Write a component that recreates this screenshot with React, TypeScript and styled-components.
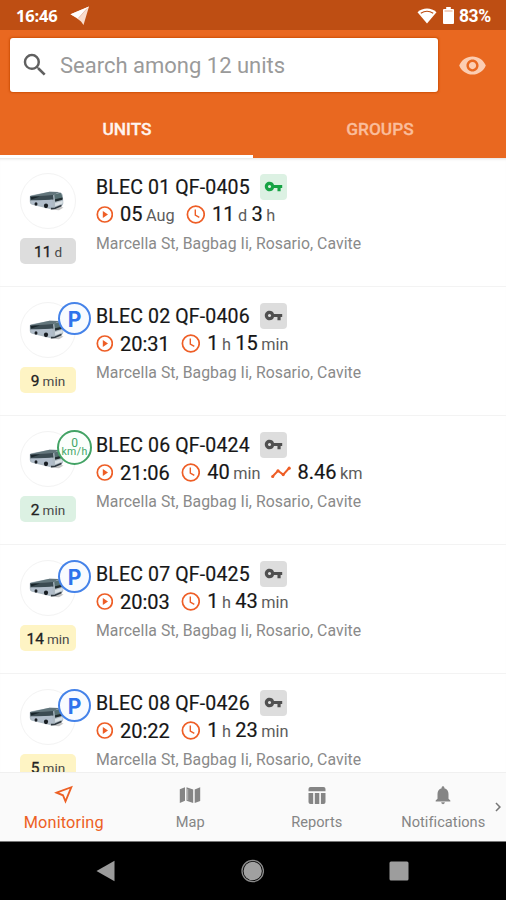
import React from "react";
import styled, { createGlobalStyle } from "styled-components";
import {
  MdSearch,
  MdVisibility,
  MdVpnKey,
  MdNotifications,
  MdChevronRight,
} from "react-icons/md";

const GlobalStyle = createGlobalStyle`
  * { box-sizing: border-box; }
  body { margin: 0; background: #fff; font-family: Roboto, sans-serif; }
`;

const Screen = styled.div`
  width: 506px;
  height: 900px;
  display: flex;
  flex-direction: column;
  overflow: hidden;
  background: #fff;
  white-space: nowrap;
  svg { display: block; flex: none; }
`;

const StatusBar = styled.div`
  flex: none;
  height: 30px;
  padding: 1px 15px 0 16px;
  display: flex;
  align-items: center;
  justify-content: space-between;
  background: #be4e13;
  color: #fff;
  font-size: 17px;
  font-weight: 700;
`;

const StatusGroup = styled.div<{ $gap: number }>`
  display: flex;
  align-items: center;
  gap: ${(p) => p.$gap}px;
`;

const Clock = styled.span`
  font-family: "Open Sans", Roboto, sans-serif;
  font-size: 16.5px;
  letter-spacing: -0.2px;
`;

const Battery = styled.span`
  margin-left: -1px;
  font-size: 17.5px;
  letter-spacing: -0.3px;
`;

const Header = styled.header`
  flex: none;
  height: 128px;
  display: flex;
  flex-direction: column;
  background: #e96820;
`;

const SearchRow = styled.div`
  height: 70px;
  padding: 8px 19px 8px 10px;
  display: flex;
  align-items: flex-start;
  justify-content: space-between;
`;

const SearchField = styled.div`
  width: 428px;
  height: 54px;
  padding-left: 10px;
  display: flex;
  align-items: center;
  border-radius: 3px;
  background: #fff;
  box-shadow: 0 0 2px 1px #cf5108;
  color: #606060;
`;

const Placeholder = styled.span`
  margin-left: 10px;
  color: #9a9a9a;
  font-size: 22px;
`;

const VisibilityButton = styled.div`
  height: 54px;
  display: flex;
  align-items: center;
  color: #fccdb2;
`;

const Tabs = styled.div`
  flex: 1;
  display: grid;
  grid-template-columns: 1fr 1fr;
`;

const Tab = styled.div<{ $active?: boolean }>`
  display: flex;
  align-items: center;
  justify-content: center;
  padding: 2px 0 0 1px;
  font-size: 17.3px;
  font-weight: 500;
  -webkit-text-stroke: 0.3px currentColor;
  color: ${(p) => (p.$active ? "#fff4ee" : "#fabd9b")};
  border-bottom: 3px solid ${(p) => (p.$active ? "#fff" : "transparent")};
`;

const List = styled.main`
  flex: 1;
  min-height: 0;
  overflow: hidden;
  box-shadow: inset 0 3px 3px -2px #e3e0de;
`;

const Row = styled.article`
  height: 129px;
  padding: 15px 20px 0;
  display: flex;
  border-bottom: 1.5px solid #f3f3f3;
`;

const Side = styled.div`
  position: relative;
  width: 56px;
  margin-right: 20px;
`;

const Avatar = styled.div`
  width: 56px;
  height: 56px;
  display: flex;
  align-items: center;
  justify-content: center;
  padding-right: 3px;
  border: 1.5px solid #f3f3f3;
  border-radius: 50%;
`;

const Age = styled.div<{ $color: string }>`
  margin-top: 9px;
  height: 26px;
  display: flex;
  align-items: baseline;
  justify-content: center;
  gap: 3px;
  border-radius: 5px;
  background: ${(p) => p.$color};
  color: #222;
  font-size: 15.5px;
  line-height: 28px;
  -webkit-text-stroke: 0.3px currentColor;
`;

const AgeUnit = styled.span`
  color: #484848;
  font-size: 13.5px;
  -webkit-text-stroke: 0;
`;

const ParkingBadge = styled.div`
  position: absolute;
  left: 38px;
  top: 0;
  width: 33px;
  height: 33px;
  display: flex;
  align-items: center;
  justify-content: center;
  border: 2px solid #4583e9;
  border-radius: 50%;
  background: #f8fbff;
  color: #2f73ec;
  font-family: Inter, Roboto, sans-serif;
  font-size: 21px;
  padding-top: 2px;
  font-weight: 700;
`;

const SpeedBadge = styled.div`
  position: absolute;
  left: 37px;
  top: -1px;
  width: 35px;
  height: 35px;
  display: flex;
  flex-direction: column;
  align-items: center;
  justify-content: center;
  padding-bottom: 2px;
  border: 2px solid #43a365;
  border-radius: 50%;
  background: #fbfffc;
  color: #41a566;
  font-size: 12px;
  line-height: 10px;
`;

const SpeedUnit = styled.span`
  font-size: 10.5px;
  line-height: 8px;
  letter-spacing: 0.4px;
`;

const Details = styled.div`
  display: flex;
  flex-direction: column;
`;

const TitleLine = styled.div`
  height: 27px;
  display: flex;
  align-items: center;
  gap: 10px;
  color: #171717;
`;

const Title = styled.span`
  width: 154px;
  font-size: 19.5px;
  padding-top: 1px;
  letter-spacing: 0.16px;
  -webkit-text-stroke: 0.2px currentColor;
`;

const KeyBadge = styled.div<{ $on?: boolean }>`
  width: 27px;
  height: 26px;
  display: flex;
  align-items: center;
  justify-content: center;
  border-radius: 4px;
  background: ${(p) => (p.$on ? "#dcf1e3" : "#dddddd")};
  color: ${(p) => (p.$on ? "#16a344" : "#505050")};
`;

const MetaLine = styled.div`
  height: 28px;
  display: flex;
  align-items: center;
  gap: 11px;
`;

const Metric = styled.div<{ $gap: number }>`
  display: flex;
  align-items: center;
  gap: ${(p) => p.$gap}px;
  color: #ee5e26;
`;

const MetricText = styled.span`
  color: #161616;
  font-size: 20px;
  padding-top: 2px;
  line-height: 24px;
  word-spacing: -0.6px;
  -webkit-text-stroke: 0.2px currentColor;
`;

const Unit = styled.span`
  color: #5c5c5c;
  font-size: 16.3px;
  -webkit-text-stroke: 0;
`;

const Address = styled.div`
  margin-top: 4px;
  color: #8a8a8a;
  font-size: 15.8px;
  line-height: 24px;
  letter-spacing: 0.05px;
`;

const BottomNav = styled.nav`
  position: relative;
  flex: none;
  height: 70px;
  display: grid;
  grid-template-columns: repeat(4, 1fr);
  background: #fafafa;
  border-top: 1px solid #f0f0f0;
  border-bottom: 1px solid #777;
`;

const NavItem = styled.div<{ $active?: boolean }>`
  display: flex;
  flex-direction: column;
  align-items: center;
  padding: 12px 0 0 1px;
  gap: ${(p) => (p.$active ? 8 : 7)}px;
  color: ${(p) => (p.$active ? "#ed6024" : "#858585")};
  font-size: ${(p) => (p.$active ? 16.3 : 14.6)}px;
  line-height: 20px;
  letter-spacing: ${(p) => (p.$active ? 0.15 : 0.05)}px;
`;

const NavIcon = styled.span`
  height: 20px;
  display: flex;
  align-items: center;
  justify-content: center;
`;

const More = styled.div`
  position: absolute;
  right: -1px;
  top: 25px;
  color: #777;
`;

const SystemNav = styled.div`
  flex: none;
  height: 58px;
  padding: 0 97px 0 95px;
  display: flex;
  align-items: center;
  justify-content: space-between;
  background: #000;
`;

const TelegramPlane = () => (
  <svg width="20" height="20" viewBox="0 0 20 20">
    <path d="M.5 8.2 19 .5 13.5 19 11 15.5 6.5 12Z" fill="#f8dccd" />
    <path d="M.5 8.2 19 .5 8 12.5Z" fill="#fff" />
    <path d="M8.5 12 17 2.5" stroke="#dda286" strokeWidth=".6" />
  </svg>
);

const Wifi = () => (
  <svg width="20" height="18" viewBox="0 0 20 18">
    <path d="M.5 5.2C5.8.2 14.2.2 19.5 5.2L10 16.5Z" fill="#fff" />
    <path d="M3.8 6.2Q10 2.4 16.2 6.2" fill="none" stroke="#be4e13" strokeWidth="1.1" />
  </svg>
);

const BatteryIcon = () => (
  <svg width="11" height="17" viewBox="0 0 11 17">
    <path d="M3.2 0h4.6v2H10q1 0 1 1v13q0 1-1 1H1q-1 0-1-1V3q0-1 1-1h2.2Z" fill="#fff" />
    <path d="M1.5 4h8" stroke="#e5a583" strokeWidth="1" />
  </svg>
);

const Bus = () => (
  <svg width="35" height="20" viewBox="0 0 35 20">
    <path d="M21 18.5 30 19.2 34.5 16.5 28 15Z" fill="#c5c5c5" />
    <path d="M.8 5.5Q1 4.6 2.5 4.2L20.5.8 30 .9Q33 1.2 33.8 4L34.3 11.5Q34.5 14.5 31.5 15.6L25 18.3 22 18.2 3 13.8Q.8 13 .8 11Z" fill="#aebac3" />
    <path d="M1.5 5 20.5.8 30 1 24 4.4Z" fill="#62757b" />
    <path d="M1 5.3 24 4 24.5 8.5 12 10 1.5 9.6Z" fill="#3b4b52" />
    <path d="M2 6 11 5.5 2.2 8.5Z" fill="#18242a" />
    <path d="M25.2 3.5 31.5 1.8Q33 3 33.5 8L26 10.3Z" fill="#587073" />
    <path d="M26 8.3 33.5 6.5V8.8L26.2 10.8Z" fill="#202b2e" />
    <path d="M2 9.6 23 8.7 24 16.5 3 12.7Z" fill="#b1bdca" />
    <path d="M26 12 33.7 9.7V12.5L26.2 15.3Z" fill="#dae1e5" />
    <ellipse cx="7" cy="13" rx="1.5" ry="1.8" fill="#171c21" />
    <ellipse cx="17" cy="14.8" rx="2.1" ry="2.4" fill="#171c21" />
    <path d="M22 17.6 26 17.2 32.5 14.5" fill="none" stroke="#2f383f" strokeWidth="1.6" />
  </svg>
);

const PlayCircle = () => (
  <svg width="17" height="17" viewBox="0 0 17 17">
    <circle cx="8.8" cy="8.5" r="7.5" fill="none" stroke="currentColor" strokeWidth="1.7" />
    <path d="M6.8 5.1 12 8.5 6.8 11.9Z" fill="currentColor" />
  </svg>
);

const ClockIcon = () => (
  <svg width="19" height="19" viewBox="0 0 19 19" fill="none" stroke="currentColor">
    <circle cx="9.8" cy="9.5" r="8.4" strokeWidth="1.7" />
    <path d="M9.3 4.6V10L13.3 12.3" strokeWidth="1.4" />
  </svg>
);

const Trend = () => (
  <svg width="21" height="13" viewBox="0 0 21 13">
    <path d="M1.5 10.5 7 4.8 12.2 8.6 18.2 2" fill="none" stroke="currentColor" strokeWidth="2" />
    <g fill="currentColor">
      <circle cx="1.7" cy="10.5" r="1.6" />
      <circle cx="7" cy="4.8" r="1.6" />
      <circle cx="12.2" cy="8.6" r="1.6" />
      <circle cx="18.2" cy="2.2" r="1.6" />
    </g>
  </svg>
);

const Pointer = () => (
  <svg width="20" height="20" viewBox="0 0 20 20">
    <path d="M2.6 7.7 17.3 2.2 11.5 16.3 9 10.3Z" fill="none" stroke="currentColor" strokeWidth="1.8" />
  </svg>
);

const MapIcon = () => (
  <svg width="22" height="20" viewBox="0 0 22 20" fill="currentColor">
    <path d="M.8 4.2 6 2.2V15.7L.8 18ZM7.5 2.2 14.2 4.5V18L7.5 15.7ZM15.7 4.5 21.2 2.3V16L15.7 18Z" />
    <path d="M8.7 4v11.2" stroke="#b5b5b5" strokeWidth="1" />
  </svg>
);

const TableIcon = () => (
  <svg width="20" height="20" viewBox="0 0 20 20" fill="currentColor">
    <path d="M3.5 2h13q2 0 2 2v2.2h-17V4q0-2 2-2ZM1.5 8h4.7v11H3.5q-2 0-2-2ZM7.8 8h4.5v11H7.8ZM13.9 8h4.6v9q0 2-2 2h-2.6Z" />
  </svg>
);

const BackKey = () => (
  <svg width="20" height="22" viewBox="0 0 20 22">
    <path d="M19.5.8V21.2L1.5 11Z" fill="#9b9b9b" />
  </svg>
);

const HomeKey = () => (
  <svg width="24" height="24" viewBox="0 0 24 24">
    <circle cx="12.7" cy="12" r="9.2" fill="#a0a0a0" />
    <circle cx="12.7" cy="12" r="10.7" fill="none" stroke="#8b8b8b" strokeWidth="1.3" />
  </svg>
);

const RecentsKey = () => (
  <svg width="20" height="20" viewBox="0 0 20 20">
    <rect x=".5" y=".5" width="19" height="19" rx="1.5" fill="#9d9d9d" />
  </svg>
);

type Part = [value: string, unit?: string];

interface UnitRow {
  name: string;
  age: [string, string];
  ageColor: string;
  keyOn?: boolean;
  badge?: "parking" | "speed";
  start: Part[];
  duration: Part[];
  distance?: Part[];
}

const YELLOW = "#fef4c4";

const units: UnitRow[] = [
  { name: "BLEC 01 QF-0405", age: ["11", "d"], ageColor: "#dddddd", keyOn: true, start: [["05", "Aug"]], duration: [["11", "d"], ["3", "h"]] },
  { name: "BLEC 02 QF-0406", age: ["9", "min"], ageColor: YELLOW, badge: "parking", start: [["20:31"]], duration: [["1", "h"], ["15", "min"]] },
  { name: "BLEC 06 QF-0424", age: ["2", "min"], ageColor: "#dcf1e3", badge: "speed", start: [["21:06"]], duration: [["40", "min"]], distance: [["8.46", "km"]] },
  { name: "BLEC 07 QF-0425", age: ["14", "min"], ageColor: YELLOW, badge: "parking", start: [["20:03"]], duration: [["1", "h"], ["43", "min"]] },
  { name: "BLEC 08 QF-0426", age: ["5", "min"], ageColor: YELLOW, badge: "parking", start: [["20:22"]], duration: [["1", "h"], ["23", "min"]] },
];

const Parts = ({ parts }: { parts: Part[] }) => (
  <MetricText>
    {parts.map(([value, unit], i) => (
      <React.Fragment key={i}>
        {i > 0 && " "}
        {value}
        {unit && <Unit> {unit}</Unit>}
      </React.Fragment>
    ))}
  </MetricText>
);

const UnitItem = ({ unit }: { unit: UnitRow }) => (
  <Row>
    <Side>
      <Avatar><Bus /></Avatar>
      {unit.badge === "parking" && <ParkingBadge>P</ParkingBadge>}
      {unit.badge === "speed" && (
        <SpeedBadge>0<SpeedUnit>km/h</SpeedUnit></SpeedBadge>
      )}
      <Age $color={unit.ageColor}>
        {unit.age[0]}
        <AgeUnit>{unit.age[1]}</AgeUnit>
      </Age>
    </Side>
    <Details>
      <TitleLine>
        <Title>{unit.name}</Title>
        <KeyBadge $on={unit.keyOn}><MdVpnKey size={19} /></KeyBadge>
      </TitleLine>
      <MetaLine>
        <Metric $gap={7}><PlayCircle /><Parts parts={unit.start} /></Metric>
        <Metric $gap={7.5}><ClockIcon /><Parts parts={unit.duration} /></Metric>
        {unit.distance && (
          <Metric $gap={5}><Trend /><Parts parts={unit.distance} /></Metric>
        )}
      </MetaLine>
      <Address>Marcella St, Bagbag Ii, Rosario, Cavite</Address>
    </Details>
  </Row>
);

export default function App() {
  return (
    <>
      <GlobalStyle />
      <Screen>
        <StatusBar>
          <StatusGroup $gap={13}>
            <Clock>16:46</Clock>
            <TelegramPlane />
          </StatusGroup>
          <StatusGroup $gap={6}>
            <Wifi />
            <BatteryIcon />
            <Battery>83%</Battery>
          </StatusGroup>
        </StatusBar>
        <Header>
          <SearchRow>
            <SearchField>
              <MdSearch size={30} />
              <Placeholder>Search among 12 units</Placeholder>
            </SearchField>
            <VisibilityButton><MdVisibility size={29} /></VisibilityButton>
          </SearchRow>
          <Tabs>
            <Tab $active>UNITS</Tab>
            <Tab>GROUPS</Tab>
          </Tabs>
        </Header>
        <List>
          {units.map((u) => <UnitItem key={u.name} unit={u} />)}
        </List>
        <BottomNav>
          <NavItem $active><NavIcon><Pointer /></NavIcon>Monitoring</NavItem>
          <NavItem><NavIcon><MapIcon /></NavIcon>Map</NavItem>
          <NavItem><NavIcon><TableIcon /></NavIcon>Reports</NavItem>
          <NavItem><NavIcon><MdNotifications size={22} /></NavIcon>Notifications</NavItem>
          <More><MdChevronRight size={18} /></More>
        </BottomNav>
        <SystemNav>
          <BackKey />
          <HomeKey />
          <RecentsKey />
        </SystemNav>
      </Screen>
    </>
  );
}
